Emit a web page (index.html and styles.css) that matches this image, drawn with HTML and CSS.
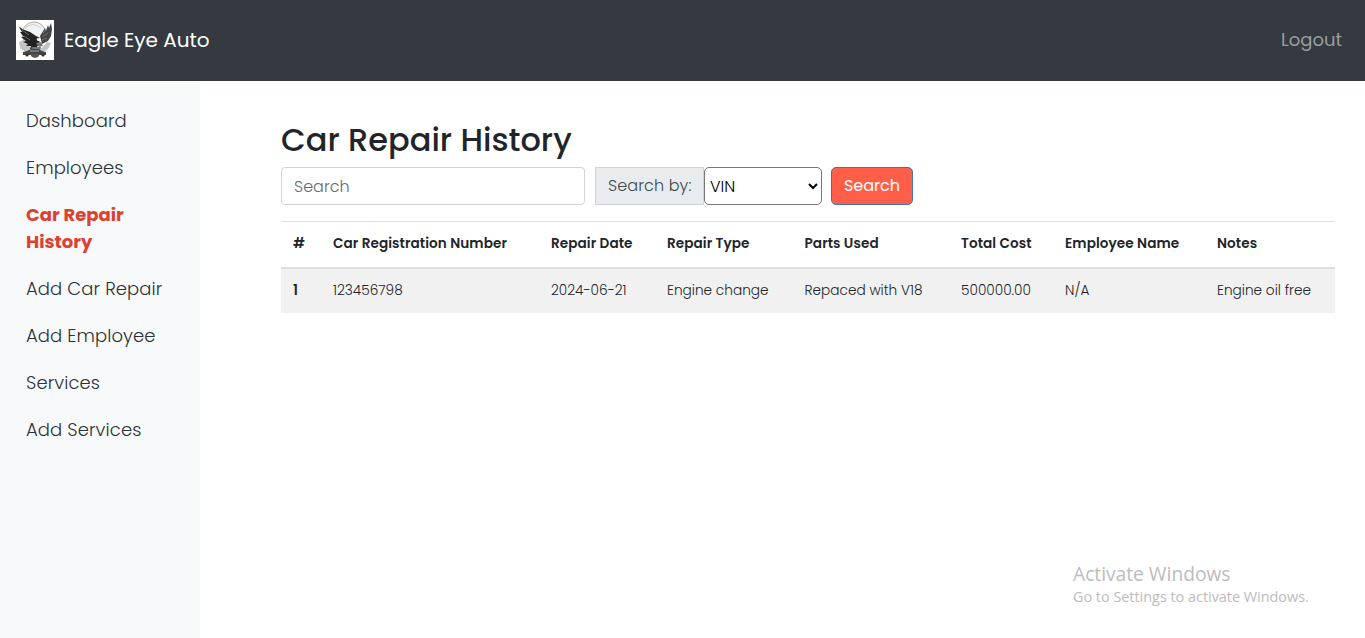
FILE: index.html
```html
<!DOCTYPE html>
<html lang="en">
<head>
<meta charset="utf-8">
<title>Eagle Eye Auto</title>
<link rel="stylesheet" href="styles.css">
</head>
<body>
<header class="navbar">
  <a class="brand">
    <svg class="logo" viewBox="0 0 38 40" aria-hidden="true">
      <rect width="38" height="40" fill="#fff"/>
      <circle cx="18" cy="14" r="12" fill="#f2f2f2" stroke="#aaa" stroke-width="1"/>
      <path d="M3 22l6-3 5 8 12 1 5-6 4 1-3 6-5 3H10l-6-4z" fill="#c4c4c4"/>
      <path d="M24 16l5-8 1 3 2-6 1 3 2-5 1 6-1 7-3 5-6 3z" fill="#444"/>
      <path d="M2 4l4 5 8 3 6 4 4 2-1 6-3 4-6 1 1-3-5 0 2-2-5-2 3-1-5-4 3 0-4-5 2 0-3-5 2 1z" fill="#222"/>
      <path d="M6 10l7 5M8 16l6 4M27 13l4-4M26 17l6-4M26 20l5-2" fill="none" stroke="#888" stroke-width=".7"/>
      <path d="M20.500 18.500l3-.5 1.500 1.500-1 1.500-2.500 0z" fill="#fff"/>
      <path d="M20 23l5-1 2 4-4 1zM15 27l4 3h5l1-3" fill="#777"/>
      <path d="M7 32l4-1 4-2h7l4 2 4 1v3H7z" fill="#444"/>
      <path d="M14 31h9" stroke="#aaa"/>
      <path d="M14 34h10l-2 3-3 1-3-1z" fill="#555"/>
      <circle cx="11" cy="35" r="1.600" fill="#333"/>
      <circle cx="27" cy="35" r="1.600" fill="#333"/>
      <path d="M4 28l3 2M31 28l3-1M9 8q8-7 16 0" fill="none" stroke="#ccc"/>
    </svg>
    <span class="brand-name">Eagle Eye Auto</span>
  </a>
  <a class="logout">Logout</a>
</header>
<div class="layout">
  <nav class="sidebar">
    <a class="side-link">Dashboard</a>
    <a class="side-link">Employees</a>
    <a class="side-link active">Car Repair History</a>
    <a class="side-link">Add Car Repair</a>
    <a class="side-link">Add Employee</a>
    <a class="side-link">Services</a>
    <a class="side-link">Add Services</a>
  </nav>
  <main class="content">
    <h2 class="title">Car Repair History</h2>
    <form class="search-row">
      <input class="search-input" type="text" placeholder="Search">
      <span class="search-by">Search by:</span>
      <select class="search-select"><option>VIN</option></select>
      <button class="search-button" type="button">Search</button>
    </form>
    <table class="repairs">
      <colgroup>
        <col class="c-num"><col class="c-reg"><col class="c-date"><col class="c-type">
        <col class="c-parts"><col class="c-cost"><col class="c-emp"><col class="c-notes">
      </colgroup>
      <thead>
        <tr><th>#</th><th>Car Registration Number</th><th>Repair Date</th><th>Repair Type</th><th>Parts Used</th><th>Total Cost</th><th>Employee Name</th><th>Notes</th></tr>
      </thead>
      <tbody>
        <tr><th>1</th><td>123456798</td><td>2024-06-21</td><td>Engine change</td><td>Repaced with V18</td><td>500000.00</td><td>N/A</td><td>Engine oil free</td></tr>
      </tbody>
    </table>
  </main>
</div>
<aside class="watermark">
  <div class="watermark-title">Activate Windows</div>
  <div class="watermark-text">Go to Settings to activate Windows.</div>
</aside>
</body>
</html>
```
FILE: styles.css
```css
* { box-sizing: border-box; }
body {
  margin: 0;
  height: 638px;
  display: flex;
  flex-direction: column;
  overflow: hidden;
  background: #fff;
  color: #212529;
  font-family: Poppins, Inter, sans-serif;
  font-size: 16px;
  line-height: 1.5;
}
.navbar {
  flex: 0 0 81px;
  display: flex;
  align-items: center;
  justify-content: space-between;
  padding: 0 23px 1px 16px;
  background: #343a40;
}
.brand { display: flex; align-items: center; gap: 10px; color: #fff; }
.logo { width: 38px; height: 40px; }
.brand-name { font-size: 20px; }
.logout { padding-bottom: 2px; font-size: 18px; color: #9a9da0; }
.layout { flex: 1; display: flex; min-height: 0; }
.sidebar {
  flex: 0 0 200px;
  padding: 16px 10px;
  background: #f8f9fa;
}
.side-link {
  display: block;
  padding: 10px 16px;
  font-size: 18px;
  line-height: 27px;
  font-weight: 300;
  letter-spacing: 0.09px;
  color: #2c3136;
}
.side-link.active { font-weight: 700; letter-spacing: 0; color: #dd4132; }
.content { flex: 1; padding: 40px 30px 0 81px; }
.title {
  margin: 0 0 8px;
  font-size: 32px;
  line-height: 38px;
  font-weight: 500;
  white-space: nowrap;
}
.search-row { display: flex; height: 38px; margin: 0 0 16px; }
.search-input, .search-select, .search-button { font: inherit; height: 38px; }
.search-input {
  width: 304px;
  margin-right: 10px;
  padding: 0 12px;
  font-weight: 300;
  border: 1px solid #ced4da;
  border-radius: 4px;
}
.search-input::placeholder { color: #626a71; opacity: 1; }
.search-by {
  width: 109px;
  padding: 0 12px;
  line-height: 36px;
  font-weight: 300;
  letter-spacing: 0.1px;
  color: #41484e;
  white-space: nowrap;
  background: #e9ecef;
  border: 1px solid #ced4da;
}
.search-select {
  width: 118px;
  margin-right: 9px;
  padding: 0 1px;
  font-weight: 300;
  color: #000;
  background: #fff;
  border: 1px solid #767676;
  border-radius: 5px;
}
.search-button {
  width: 82px;
  padding: 0;
  color: #fff;
  background: #ff5f49;
  border: 1px solid #4472b0;
  border-radius: 5px;
}
.repairs {
  width: 1054px;
  table-layout: fixed;
  border-collapse: separate;
  border-spacing: 0;
  font-size: 13.7px;
  line-height: 20px;
}
.repairs th, .repairs td {
  padding: 12px;
  text-align: left;
  white-space: nowrap;
  border-top: 1px solid #dee2e6;
}
.repairs th { font-size: 13.6px; font-weight: 600; letter-spacing: 0.08px; }
.repairs td { font-weight: 300; }
.repairs thead th { height: 48px; padding: 11px 12px 13px; border-bottom: 2px solid #dcdee0; }
.repairs tbody th, .repairs tbody td { height: 44px; border-top: 0; background: #f1f1f1; }
.c-num { width: 40px; }
.c-reg { width: 218px; }
.c-date { width: 116px; }
.c-type { width: 137.5px; }
.c-parts { width: 156.5px; }
.c-cost { width: 104px; }
.c-emp { width: 152px; }
.c-notes { width: 130px; }
.watermark {
  position: absolute;
  left: 1073px;
  top: 561px;
  color: #bcbcbc;
  font-family: "Segoe UI", "Open Sans", sans-serif;
  white-space: nowrap;
}
.watermark-title { font-size: 19.200px; line-height: 26px; }
.watermark-text { font-size: 14.400px; line-height: 20px; }
```
